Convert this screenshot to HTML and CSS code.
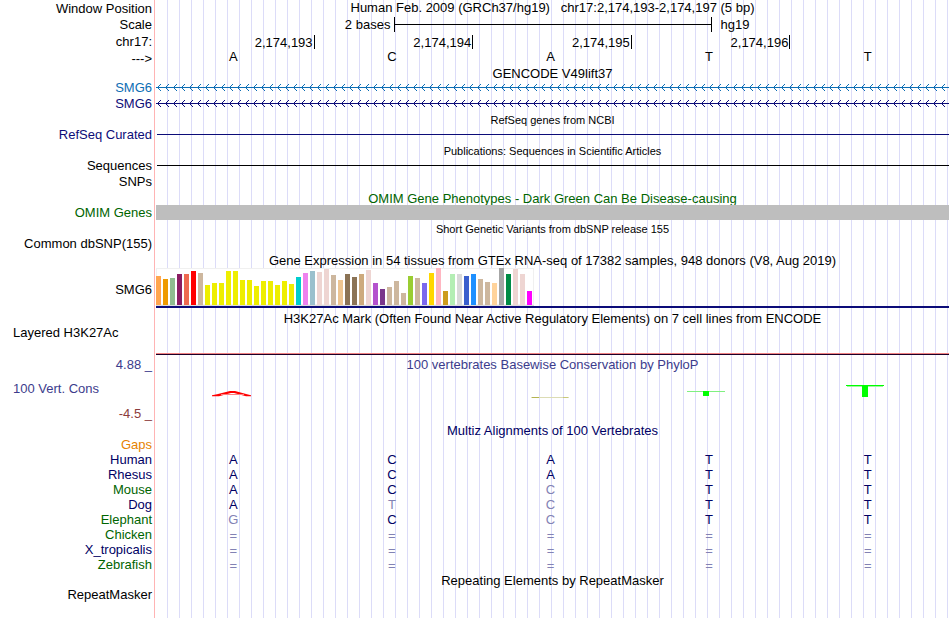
FILE: index.html
```html
<!DOCTYPE html>
<html lang="en">
<head>
  <meta charset="UTF-8" />
  <title>Human chr17:2,174,193-2,174,197 - Genome Browser hg19</title>
  <link rel="stylesheet" href="styles.css">
</head>
<body>

<main class="browser">

  <!-- Ruler -->
  <section class="ruler">
    <div class="row position">
      <div class="label">Window Position</div>
      <div class="track title">Human Feb. 2009 (GRCh37/hg19)&nbsp;&nbsp; chr17:2,174,193-2,174,197 (5 bp)</div>
    </div>
    <div class="row tall">
      <div class="label">Scale</div>
      <div class="track scale">
        <span class="scale-left">2 bases</span>
        <span class="scale-bar"></span>
        <span class="scale-right">hg19</span>
      </div>
    </div>
    <div class="row tall">
      <div class="label">chr17:</div>
      <div class="track ticks">
        <span>2,174,193</span><span>2,174,194</span><span>2,174,195</span><span>2,174,196</span>
      </div>
    </div>
    <div class="row position">
      <div class="label">---&gt;</div>
      <div class="track bases sequence"><span>A</span><span>C</span><span>A</span><span>T</span><span>T</span></div>
    </div>
  </section>

  <section class="group">
    <div class="row head"><div class="label"></div><h2 class="track title">GENCODE V49lift37</h2></div>
    <div class="row spaced blue">
      <div class="label">SMG6</div>
      <div class="track">
        <svg class="arrows" width="100%" height="15">
          <defs>
            <pattern id="arrow-blue" width="8" height="15" patternUnits="userSpaceOnUse">
              <path d="M1 7h1v1h-1zM2 6h1v1h-1zM2 8h1v1h-1zM3 5h1v1h-1zM3 9h1v1h-1zM4 4h1v1h-1zM4 10h1v1h-1z" fill="#0c6eb4" />
            </pattern>
          </defs>
          <rect width="100%" height="15" fill="url(#arrow-blue)" />
          <rect y="7" width="100%" height="1" fill="currentColor" />
        </svg>
      </div>
    </div>
    <div class="row navy">
      <div class="label">SMG6</div>
      <div class="track">
        <svg class="arrows" width="100%" height="15">
          <defs>
            <pattern id="arrow-navy" width="8" height="15" patternUnits="userSpaceOnUse">
              <path d="M1 7h1v1h-1zM2 6h1v1h-1zM2 8h1v1h-1zM3 5h1v1h-1zM3 9h1v1h-1zM4 4h1v1h-1zM4 10h1v1h-1z" fill="#0c0c78" />
            </pattern>
          </defs>
          <rect width="100%" height="15" fill="url(#arrow-navy)" />
          <rect y="7" width="100%" height="1" fill="currentColor" />
        </svg>
      </div>
    </div>
  </section>

  <section class="group">
    <div class="row head"><div class="label"></div><h2 class="track title small">RefSeq genes from NCBI</h2></div>
    <div class="row navy">
      <div class="label">RefSeq Curated</div>
      <div class="track"><div class="line"></div></div>
    </div>
  </section>

  <section class="group">
    <div class="row head"><div class="label"></div><h2 class="track title small">Publications: Sequences in Scientific Articles</h2></div>
    <div class="row spaced">
      <div class="label">Sequences</div>
      <div class="track"><div class="line"></div></div>
    </div>
    <div class="row">
      <div class="label">SNPs</div>
      <div class="track"></div>
    </div>
  </section>

  <section class="group green">
    <div class="row head"><div class="label"></div><h2 class="track title omim-title">OMIM Gene Phenotypes - Dark Green Can Be Disease-causing</h2></div>
    <div class="row">
      <div class="label">OMIM Genes</div>
      <div class="track omim"></div>
    </div>
  </section>

  <section class="group">
    <div class="row head"><div class="label"></div><h2 class="track title small">Short Genetic Variants from dbSNP release 155</h2></div>
    <div class="row">
      <div class="label">Common dbSNP(155)</div>
      <div class="track"></div>
    </div>
  </section>

  <section class="group">
    <div class="row head"><div class="label"></div><h2 class="track title">Gene Expression in 54 tissues from GTEx RNA-seq of 17382 samples, 948 donors (V8, Aug 2019)</h2></div>
    <div class="row gtex">
      <div class="label">SMG6</div>
      <div class="track">
        <div class="chart" id="gtex-chart"></div>
        <div class="gene-line"></div>
      </div>
    </div>
  </section>

  <section class="group">
    <div class="row head"><div class="label"></div><h2 class="track title">H3K27Ac Mark (Often Found Near Active Regulatory Elements) on 7 cell lines from ENCODE</h2></div>
    <div class="row h3k">
      <div class="label left">Layered H3K27Ac</div>
      <div class="track"></div>
    </div>
  </section>

  <section class="group cons">
    <div class="row head"><div class="label">4.88 _</div><h2 class="track title">100 vertebrates Basewise Conservation by PhyloP</h2></div>
    <div class="row phylop">
      <div class="label stack">
        <span class="cons-name">100 Vert. Cons</span>
        <span class="minimum">-4.5 _</span>
      </div>
      <div class="track bases">
        <svg width="40" height="50">
          <path d="M-1 24.2L4 23.3L17 20H22L34 23.3L38 24.2V25.2H33L21 22H18L6 25.2H-1Z" fill="#ff0000" />
          <rect x="8" y="23" width="23" height="1" fill="#ff8080" />
        </svg>
        <svg width="40" height="50"></svg>
        <svg width="40" height="50">
          <rect x="1" y="26" width="38" height="1" fill="#dcdcb4" />
          <rect x="2" y="26" width="7" height="1" fill="#b4b450" />
          <rect x="33" y="26" width="5" height="1" fill="#c8c878" />
        </svg>
        <svg width="40" height="50">
          <rect x="-2" y="20" width="38" height="1" fill="#80f080" />
          <rect x="14" y="20" width="6" height="5" fill="#00ff00" />
        </svg>
        <svg width="40" height="50">
          <rect x="-2" y="14" width="38" height="1" fill="#00ff00" />
          <rect x="-1" y="15" width="36" height="1" fill="#a0f5a0" />
          <rect x="14" y="14" width="6" height="12" fill="#00ff00" />
        </svg>
      </div>
    </div>
  </section>

  <section class="group multiz">
    <div class="row head"><div class="label"></div><h2 class="track title">Multiz Alignments of 100 Vertebrates</h2></div>
    <div class="row"><div class="label gaps">Gaps</div><div class="track"></div></div>
    <div class="row">
      <div class="label">Human</div>
      <div class="track bases"><span>A</span><span>C</span><span>A</span><span>T</span><span>T</span></div>
    </div>
    <div class="row">
      <div class="label">Rhesus</div>
      <div class="track bases"><span>A</span><span>C</span><span>A</span><span>T</span><span>T</span></div>
    </div>
    <div class="row">
      <div class="label green">Mouse</div>
      <div class="track bases"><span>A</span><span>C</span><span class="diff">C</span><span>T</span><span>T</span></div>
    </div>
    <div class="row">
      <div class="label">Dog</div>
      <div class="track bases"><span>A</span><span class="diff">T</span><span class="diff">C</span><span>T</span><span>T</span></div>
    </div>
    <div class="row">
      <div class="label green">Elephant</div>
      <div class="track bases"><span class="diff">G</span><span>C</span><span class="diff">C</span><span>T</span><span>T</span></div>
    </div>
    <div class="row">
      <div class="label green">Chicken</div>
      <div class="track bases diff unaligned"><span>=</span><span>=</span><span>=</span><span>=</span><span>=</span></div>
    </div>
    <div class="row">
      <div class="label">X_tropicalis</div>
      <div class="track bases diff unaligned"><span>=</span><span>=</span><span>=</span><span>=</span><span>=</span></div>
    </div>
    <div class="row">
      <div class="label green">Zebrafish</div>
      <div class="track bases diff unaligned"><span>=</span><span>=</span><span>=</span><span>=</span><span>=</span></div>
    </div>
  </section>

  <section class="group">
    <div class="row head"><div class="label"></div><h2 class="track title">Repeating Elements by RepeatMasker</h2></div>
    <div class="row">
      <div class="label">RepeatMasker</div>
      <div class="track"></div>
    </div>
  </section>

</main>

<script src="script.js"></script>
</body>
</html>
```

FILE: styles.css
```css
body {
  margin: 0;
  background: #fff;
  color: #000;
  font-family: "Liberation Sans", Arial, Helvetica, sans-serif;
  font-size: 13px;
  line-height: 15px;
}

/* pink divider after the labels, then a guide line every 12px */
.browser {
  min-height: 100vh;
  background-image:
    linear-gradient(#ffb4b4, #ffb4b4),
    repeating-linear-gradient(to right, transparent 0, transparent 11px, #dcdcf8 11px, #dcdcf8 12px);
  background-position: 154px 0, 156px 0;
  background-size: 1px 100%, 100% 100%;
  background-repeat: no-repeat;
}

.group {
  margin-bottom: 2px;
}

.row {
  display: flex;
  height: 15px;
  padding-right: 1px;
}

.row.spaced {
  margin-bottom: 1px;
}

.row.head {
  height: 14px;
  line-height: 16px;
}

.row.position {
  height: 16px;
  line-height: 16px;
}

.row.tall {
  height: 17px;
  line-height: 17px;
}

.label {
  width: 152px;
  flex: none;
  text-align: right;
  white-space: nowrap;
}

.ruler .label {
  line-height: 18px;
}

.label.left {
  box-sizing: border-box;
  padding-left: 13px;
  text-align: left;
}

.track {
  flex: 1;
  min-width: 0;
  margin-left: 4px;
}

.title {
  margin-top: 0;
  margin-bottom: 0;
  font-size: 13px;
  font-weight: normal;
  text-align: center;
  white-space: nowrap;
}

.title.small {
  font-size: 11px;
  line-height: 14px;
}

/* Scale bar and position ticks */
.scale {
  display: flex;
  margin-left: 5px;
  margin-right: -1px;
}

.scale-left,
.scale-right {
  flex: 3;
  padding: 0 4px;
}

.scale-left {
  text-align: right;
}

.scale-right {
  padding-left: 9px;
  padding-right: 0;
}

.scale-bar {
  flex: none;
  width: 40%;
  height: 15px;
  margin-top: 1px;
  box-sizing: border-box;
  border-left: 1px solid #000;
  border-right: 1px solid #000;
  background: linear-gradient(#000, #000) 0 7px / 100% 1px no-repeat;
}

.ticks {
  display: grid;
  grid-template-columns: repeat(5, 1fr);
}

.ticks span {
  height: 14px;
  margin-top: 2px;
  padding-right: 1px;
  border-right: 1px solid #000;
  line-height: 16px;
  text-align: right;
}

.bases {
  display: grid;
  grid-template-columns: repeat(5, 1fr);
  justify-items: center;
  margin-left: 2px;
  margin-right: 2px;
}

.bases.sequence {
  line-height: 14px;
}

.bases.unaligned {
  line-height: 17px;
}

/* Gene tracks */
.arrows {
  display: block;
}

.line {
  height: 1px;
  margin: 7px 0 0 1px;
  background: currentColor;
}

.omim-title {
  overflow: hidden;
}

.omim {
  background: #bebebe;
}

.row.gtex {
  height: 42px;
  line-height: 46px;
}

.chart {
  display: flex;
  align-items: flex-end;
  gap: 2px;
  box-sizing: border-box;
  width: 378px;
  height: 38px;
  margin-top: 1px;
  border-bottom: 1px solid #dcdcdc;
  background: #fff;
  box-shadow: inset 0 0 0 1px #f0f0f0;
}

.bar {
  width: 5px;
}

.gene-line {
  height: 2px;
  background: #0c0c78;
}

.row.h3k {
  height: 30px;
}

.h3k .track {
  border-bottom: 1px solid #1e0028;
  box-shadow: inset 0 -1px #f08080;
}

/* Conservation */
.row.phylop {
  height: 50px;
}

.stack {
  display: flex;
  flex-direction: column;
  gap: 10px;
  box-sizing: border-box;
  padding-top: 10px;
}

.cons-name {
  padding-left: 13px;
  text-align: left;
}

.phylop svg {
  display: block;
  overflow: visible;
}

.cons {
  color: #3c3c8c;
}

.minimum {
  color: #8c3c3c;
}

.multiz {
  margin-bottom: 1px;
  color: #000064;
}

.gaps {
  color: #e68200;
}

.diff {
  color: #8282b4;
}

.blue {
  color: #0c6eb4;
}

.navy {
  color: #0c0c78;
}

.green {
  color: #006400;
}
```

FILE: script.js
```js
// GTEx median expression, one [height, color] pair per tissue
const tissues = [
  [29, "#ffa54f"], [26, "#ee9a00"], [27, "#8fbc8f"], [31, "#8b1c62"], [31, "#ee6a50"], [34, "#ff0000"],
  [32, "#cdb79e"], [20, "#eeee00"], [22, "#eeee00"], [22, "#eeee00"], [34, "#eeee00"], [34, "#eeee00"],
  [25, "#eeee00"], [25, "#eeee00"], [19, "#eeee00"], [24, "#eeee00"], [24, "#eeee00"], [20, "#eeee00"],
  [24, "#eeee00"], [21, "#eeee00"], [28, "#00cdcd"], [32, "#ee82ee"], [34, "#9ac0cd"], [33, "#eed5d2"],
  [36, "#eed5d2"], [30, "#cdb79e"], [25, "#eec591"], [31, "#8b7355"], [28, "#8b7355"], [31, "#cdaa7d"],
  [35, "#eed5d2"], [22, "#b452cd"], [16, "#7a378b"], [18, "#cdb79e"], [24, "#cdb79e"], [12, "#cdb79e"],
  [29, "#9acd32"], [27, "#cdb79e"], [22, "#7b68ee"], [32, "#ffd700"], [37, "#ffb6c1"], [14, "#cd9b1d"],
  [31, "#b4eeb4"], [31, "#d9d9d9"], [29, "#3a5fcd"], [31, "#1e90ff"], [26, "#cdb79e"], [23, "#cdb79e"],
  [22, "#ffd39b"], [37, "#a6a6a6"], [31, "#008b45"], [36, "#eed5d2"], [31, "#eed5d2"], [14, "#ff00ff"]
];

const chart = document.getElementById("gtex-chart");

tissues.forEach(function([height, color]) {
  const bar = document.createElement("span");
  bar.className = "bar";
  bar.style.height = height + "px";
  bar.style.backgroundColor = color;
  chart.appendChild(bar);
});
```
